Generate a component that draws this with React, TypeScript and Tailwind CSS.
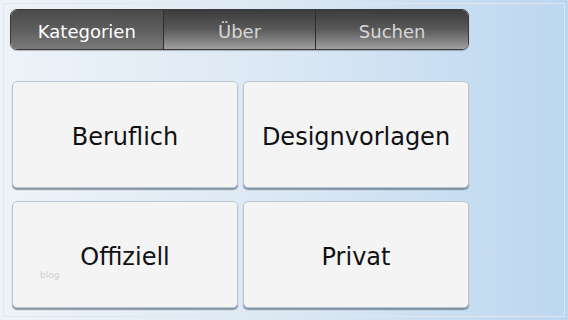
import React from "react";

const tabs = [
  { label: "Kategorien", active: true },
  { label: "Über", active: false },
  { label: "Suchen", active: false },
];

const cards = ["Beruflich", "Designvorlagen", "Offiziell", "Privat"];

export default function App() {
  return (
    <div
      className="relative w-[568px] h-[320px] overflow-hidden bg-gradient-to-r from-[#eef3f8] via-[#dbe8f4] to-[#bcd7f0]"
      style={{ fontFamily: '"DejaVu Sans", Verdana, sans-serif' }}
    >
      <div className="absolute inset-[3px] border border-[#dfe6ee] pointer-events-none" />
      <div className="relative flex flex-col pl-[10px] pt-[9px] w-[470px]">
        {/* tab bar */}
        <div className="flex h-[41px] w-[459px] rounded-[7px] overflow-hidden border border-[#3a3a3a] shadow-[0_1px_1px_rgba(0,0,0,0.25)]">
          {tabs.map((t, i) => (
            <div
              key={t.label}
              className={`flex-1 flex items-center justify-center pt-[3px] text-[18px] ${
                i > 0 ? "border-l border-[#2e2e2e]" : ""
              } ${
                t.active
                  ? "bg-gradient-to-b from-[#4a4a4a] via-[#5e5e5e] to-[#7a7a7a] text-white"
                  : "bg-gradient-to-b from-[#3c3c3c] via-[#5a5a5a] to-[#a0a0a0] text-[#d8d8d8]"
              }`}
            >
              {t.label}
            </div>
          ))}
        </div>

        {/* category grid */}
        <div className="grid grid-cols-2 gap-x-[5px] gap-y-[13px] mt-[31px] ml-[2px] w-[457px]">
          {cards.map((c) => (
            <div
              key={c}
              className="relative h-[107px] flex items-center justify-center pt-[4px] rounded-[5px] bg-[#f4f4f4] border border-[#b9c6d0] shadow-[0_2px_1px_rgba(60,80,100,0.55)] text-[24px] text-[#111]"
            >
              {c}
              {c === "Offiziell" && (
                <span className="absolute left-[27px] top-[67px] text-[9px] text-[#cfcfcf]">blog</span>
              )}
            </div>
          ))}
        </div>
      </div>
    </div>
  );
}
